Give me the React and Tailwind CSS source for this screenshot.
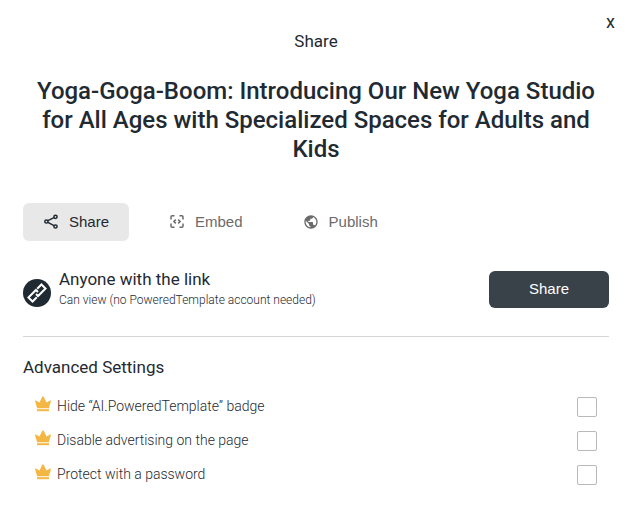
import React, { useState } from 'react';
import { MdPublic } from 'react-icons/md';

const ShareIcon = () => (
    <svg width="16" height="16" viewBox="0 0 16 16" fill="none" stroke="currentColor" strokeWidth="1.5" aria-hidden="true">
        <circle cx="12.5" cy="2.8" r="1.6" />
        <circle cx="3.4" cy="7.5" r="1.6" />
        <circle cx="12.5" cy="12.5" r="1.6" />
        <path d="M4.9 6.7 11 3.6M4.9 8.4l6.1 3.3" />
    </svg>
);

const EmbedIcon = () => (
    <svg width="16" height="16" viewBox="0 0 16 16" fill="none" stroke="currentColor" strokeWidth="1.5" aria-hidden="true">
        <path d="M5.5 1.8H3.2Q2 1.8 2 3v2.5M10.5 1.8h2.3q1.2 0 1.2 1.2v2.5M2 9.5v2.6q0 1.2 1.2 1.2h2.3M14 9.5v2.6q0 1.2-1.2 1.2h-2.3" />
        <path d="M6.8 5.6 4.9 7.5l1.9 1.9M9.2 5.6l1.9 1.9-1.9 1.9" />
    </svg>
);

const LinkIcon = () => (
    <svg className="mt-2" width="28" height="28" viewBox="0 0 28 28" fill="none" aria-hidden="true">
        <circle cx="14" cy="14" r="14" fill="#1f2a33" />
        <g transform="rotate(-45 14 14)" stroke="#fff" strokeWidth="2">
            <path d="M10.8 16.9H4.8V11.1H15.4V14" />
            <path d="M17.2 11.1H23.2V16.9H12.6V14" />
        </g>
    </svg>
);

const CrownIcon = () => (
    <svg width="16" height="16" viewBox="0 0 16 16" fill="#f5b743" aria-hidden="true">
        <path d="M2.2 12.2 0 5Q0 4.3.8 4.5L4.5 6.6 7.3.8Q8-.1 8.7.8L11.5 6.6l3.7-2.1Q16 4.3 16 5l-2.2 7.2z" />
        <path d="M2 13.2h12v2H2z" />
    </svg>
);

const tabs = [
    { id: 'share', label: 'Share', icon: <ShareIcon /> },
    { id: 'embed', label: 'Embed', icon: <EmbedIcon /> },
    { id: 'publish', label: 'Publish', icon: <MdPublic size={16} /> },
];

const settings = [
    { id: 'badge', label: 'Hide “AI.PoweredTemplate” badge' },
    { id: 'ads', label: 'Disable advertising on the page' },
    { id: 'password', label: 'Protect with a password' },
];

export default function App() {
    const [active, setActive] = useState('share');

    return (
        <main className="relative min-h-screen bg-white px-[23px] pt-[29px] pb-6 font-['Roboto',sans-serif] text-[#1f2a33]">
            <button aria-label="Close" className="absolute top-[10px] right-[13px] px-1 text-lg leading-6">
                x
            </button>

            <p className="text-center text-[17px] leading-6">Share</p>
            <h1 className="mt-6 text-center text-2xl leading-[29px] font-medium">
                Yoga-Goga-Boom: Introducing Our New Yoga Studio for All Ages with Specialized Spaces for Adults and Kids
            </h1>

            <nav className="mt-[39px] flex gap-5 font-['Liberation_Sans',sans-serif] text-[15px]">
                {tabs.map((tab) => (
                    <button
                        key={tab.id}
                        onClick={() => setActive(tab.id)}
                        className={`flex h-[38px] items-center gap-[10px] rounded-md px-5 ${active === tab.id ? 'bg-[#e8e8e8]' : 'text-[#6b6b6b]'}`}
                    >
                        {tab.icon}
                        {tab.label}
                    </button>
                ))}
            </nav>

            <section className="mt-[27px] flex items-center justify-between border-b border-[#d5d5d5] pb-[26px]">
                <div className="flex items-center gap-2">
                    <LinkIcon />
                    <div>
                        <h2 className="text-[17px] leading-[22px]">Anyone with the link</h2>
                        <p className="text-xs leading-5 font-light">Can view (no PoweredTemplate account needed)</p>
                    </div>
                </div>
                <button className="h-[37px] w-[120px] rounded-md bg-[#394149] font-['Liberation_Sans',sans-serif] text-[15px] text-white">
                    Share
                </button>
            </section>

            <section className="mt-5">
                <h2 className="text-[17px] leading-5">Advanced Settings</h2>
                <ul className="mt-[13px] px-3">
                    {settings.map((item) => (
                        <li key={item.id} className="flex h-[34px] items-center justify-between">
                            <label htmlFor={item.id} className="flex items-start gap-[6px] pb-[2px] text-sm leading-5 font-light">
                                <CrownIcon />
                                {item.label}
                            </label>
                            <input
                                id={item.id}
                                type="checkbox"
                                className="size-5 appearance-none rounded-xs border border-[#b9b9b9] bg-white checked:bg-[#394149]"
                            />
                        </li>
                    ))}
                </ul>
            </section>
        </main>
    );
}
